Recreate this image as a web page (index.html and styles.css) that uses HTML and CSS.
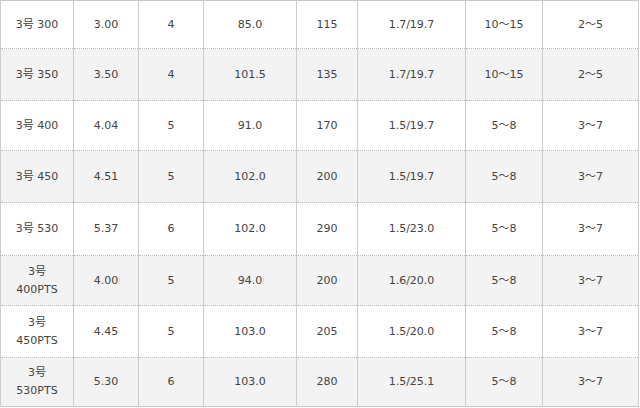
FILE: index.html
```html
<!DOCTYPE html>
<html lang="ja">
<head>
<meta charset="utf-8">
<link rel="stylesheet" href="styles.css">
</head>
<body>
<table class="spec">
  <colgroup>
    <col class="c1"><col class="c2"><col class="c3"><col class="c4"><col class="c5"><col class="c6"><col class="c7"><col class="c8">
  </colgroup>
  <tbody>
    <tr><td>3号 300</td><td>3.00</td><td>4</td><td>85.0</td><td>115</td><td>1.7/19.7</td><td>10～15</td><td>2～5</td></tr>
    <tr><td>3号 350</td><td>3.50</td><td>4</td><td>101.5</td><td>135</td><td>1.7/19.7</td><td>10～15</td><td>2～5</td></tr>
    <tr><td>3号 400</td><td>4.04</td><td>5</td><td>91.0</td><td>170</td><td>1.5/19.7</td><td>5～8</td><td>3～7</td></tr>
    <tr><td>3号 450</td><td>4.51</td><td>5</td><td>102.0</td><td>200</td><td>1.5/19.7</td><td>5～8</td><td>3～7</td></tr>
    <tr><td>3号 530</td><td>5.37</td><td>6</td><td>102.0</td><td>290</td><td>1.5/23.0</td><td>5～8</td><td>3～7</td></tr>
    <tr><td>3号<br>400PTS</td><td>4.00</td><td>5</td><td>94.0</td><td>200</td><td>1.6/20.0</td><td>5～8</td><td>3～7</td></tr>
    <tr><td>3号<br>450PTS</td><td>4.45</td><td>5</td><td>103.0</td><td>205</td><td>1.5/20.0</td><td>5～8</td><td>3～7</td></tr>
    <tr><td>3号<br>530PTS</td><td>5.30</td><td>6</td><td>103.0</td><td>280</td><td>1.5/25.1</td><td>5～8</td><td>3～7</td></tr>
  </tbody>
</table>
</body>
</html>
```

FILE: styles.css
```css
html, body {
  margin: 0;
  padding: 0;
  background: #ffffff;
}

.spec {
  border-collapse: collapse;
  table-layout: fixed;
  width: 638px;
  font-family: "DejaVu Sans", "Noto Sans CJK JP", sans-serif;
  font-size: 11px;
  line-height: 18px;
  color: #444444;
  border: 1px solid #c8c8c8;
}

.c1 { width: 73px; }
.c2 { width: 65px; }
.c3 { width: 65px; }
.c4 { width: 93px; }
.c5 { width: 61px; }
.c6 { width: 108px; }
.c7 { width: 77px; }
.c8 { width: 96px; }

.spec td {
  text-align: center;
  vertical-align: middle;
  padding: 0;
  border-left: 1px solid #cccccc;
  border-right: 1px solid #cccccc;
  border-bottom: 1px dotted #bbbbbb;
}

.spec tr:nth-child(even) td {
  background: #f3f3f3;
}

.spec tr:nth-child(1) { height: 48px; }
.spec tr:nth-child(2) { height: 52px; }
.spec tr:nth-child(3) { height: 50px; }
.spec tr:nth-child(4) { height: 52px; }
.spec tr:nth-child(5) { height: 53px; }
.spec tr:nth-child(6) { height: 50px; }
.spec tr:nth-child(7) { height: 52px; }
.spec tr:nth-child(8) { height: 49px; }

.spec tr:last-child td {
  border-bottom: 1px solid #c8c8c8;
}
```
